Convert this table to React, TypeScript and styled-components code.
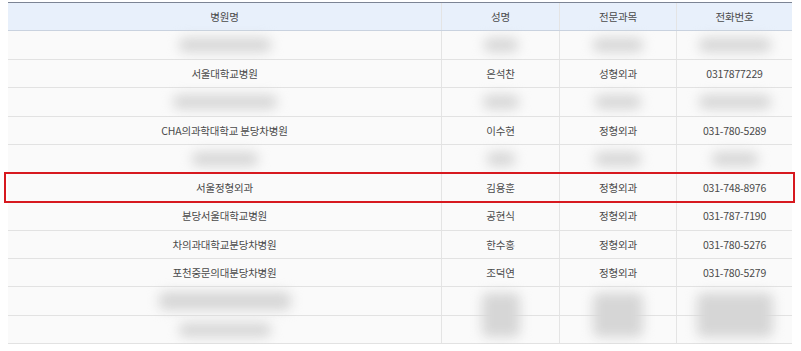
import styled, { createGlobalStyle, css } from "styled-components";

const GlobalStyle = createGlobalStyle`
  html, body {
    margin: 0;
    padding: 0;
    background: #ffffff;
  }
  body {
    font-family: "Noto Sans CJK KR", "Noto Sans", sans-serif;
  }
`

const Page = styled.div`
  padding: 2px 9px 0 8px;
`

const Grid = styled.div`
  width: 784px;
  border-top: 1px solid #7c8494;
`

const Row = styled.div<{ $head?: boolean; $marked?: boolean; $raised?: boolean }>`
  display: grid;
  grid-template-columns: 433px 118px 117px 116px;
  height: 28.45px;
  box-sizing: border-box;
  border-bottom: 1px solid ${(p) => (p.$head ? "#c9d2df" : "#e2e2e2")};
  background: ${(p) => (p.$head ? "#e8f0fb" : "#fafafa")};
  position: relative;
  z-index: ${(p) => (p.$marked ? 3 : p.$raised ? 2 : "auto")};
  ${(p) =>
    p.$marked &&
    css`
      &::after {
        content: "";
        position: absolute;
        top: -2px;
        bottom: -2px;
        left: -4px;
        right: -3px;
        border: 2px solid #d7191f;
        pointer-events: none;
      }
    `}
`

const Cell = styled.div<{ $first?: boolean }>`
  position: relative;
  display: flex;
  align-items: center;
  justify-content: center;
  font-size: 10.5px;
  color: #4a4a4a;
  letter-spacing: -0.2px;
  border-left: ${(p) => (p.$first ? "none" : "1px solid #e4e4e4")};
  white-space: nowrap;
`

const Blur = styled.span<{ $w: number; $h?: number; $tall?: boolean }>`
  display: block;
  width: ${(p) => p.$w}px;
  height: ${(p) => p.$h ?? 14}px;
  background: #d6d6d6;
  border-radius: 6px;
  filter: blur(6px);
  ${(p) =>
    p.$tall &&
    css`
      position: absolute;
      top: 6px;
      left: 50%;
      transform: translateX(-50%);
    `}
`

type Item = { name?: string; person?: string; dept?: string; phone?: string; blur?: number[]; marked?: boolean; tall?: boolean }

const rows: Item[] = [
  { blur: [92, 34, 50, 72] },
  { name: "서울대학교병원", person: "은석찬", dept: "성형외과", phone: "0317877229" },
  { blur: [104, 36, 46, 72] },
  { name: "CHA의과학대학교 분당차병원", person: "이수현", dept: "정형외과", phone: "031-780-5289" },
  { blur: [66, 28, 46, 46] },
  { name: "서울정형외과", person: "김용훈", dept: "정형외과", phone: "031-748-8976", marked: true },
  { name: "분당서울대학교병원", person: "공현식", dept: "정형외과", phone: "031-787-7190" },
  { name: "차의과대학교분당차병원", person: "한수홍", dept: "정형외과", phone: "031-780-5276" },
  { name: "포천중문의대분당차병원", person: "조덕연", dept: "정형외과", phone: "031-780-5279" },
  { blur: [132, 38, 50, 76], tall: true },
  { blur: [92] },
]

export default function App() {
  return (
    <Page>
      <GlobalStyle />
      <Grid>
        <Row $head>
          <Cell $first>병원명</Cell>
          <Cell>성명</Cell>
          <Cell>전문과목</Cell>
          <Cell>전화번호</Cell>
        </Row>
        {rows.map((r, i) =>
          r.blur ? (
            <Row key={i} $raised={r.tall}>
              <Cell $first>
                <Blur $w={r.blur[0]} $h={r.tall ? 18 : 14} />
              </Cell>
              {[1, 2, 3].map((c) => (
                <Cell key={c}>
                  {r.blur![c] !== undefined && <Blur $w={r.blur![c]} $h={r.tall ? 44 : 14} $tall={r.tall} />}
                </Cell>
              ))}
            </Row>
          ) : (
            <Row key={i} $marked={r.marked}>
              <Cell $first>{r.name}</Cell>
              <Cell>{r.person}</Cell>
              <Cell>{r.dept}</Cell>
              <Cell>{r.phone}</Cell>
            </Row>
          )
        )}
      </Grid>
    </Page>
  )
}
